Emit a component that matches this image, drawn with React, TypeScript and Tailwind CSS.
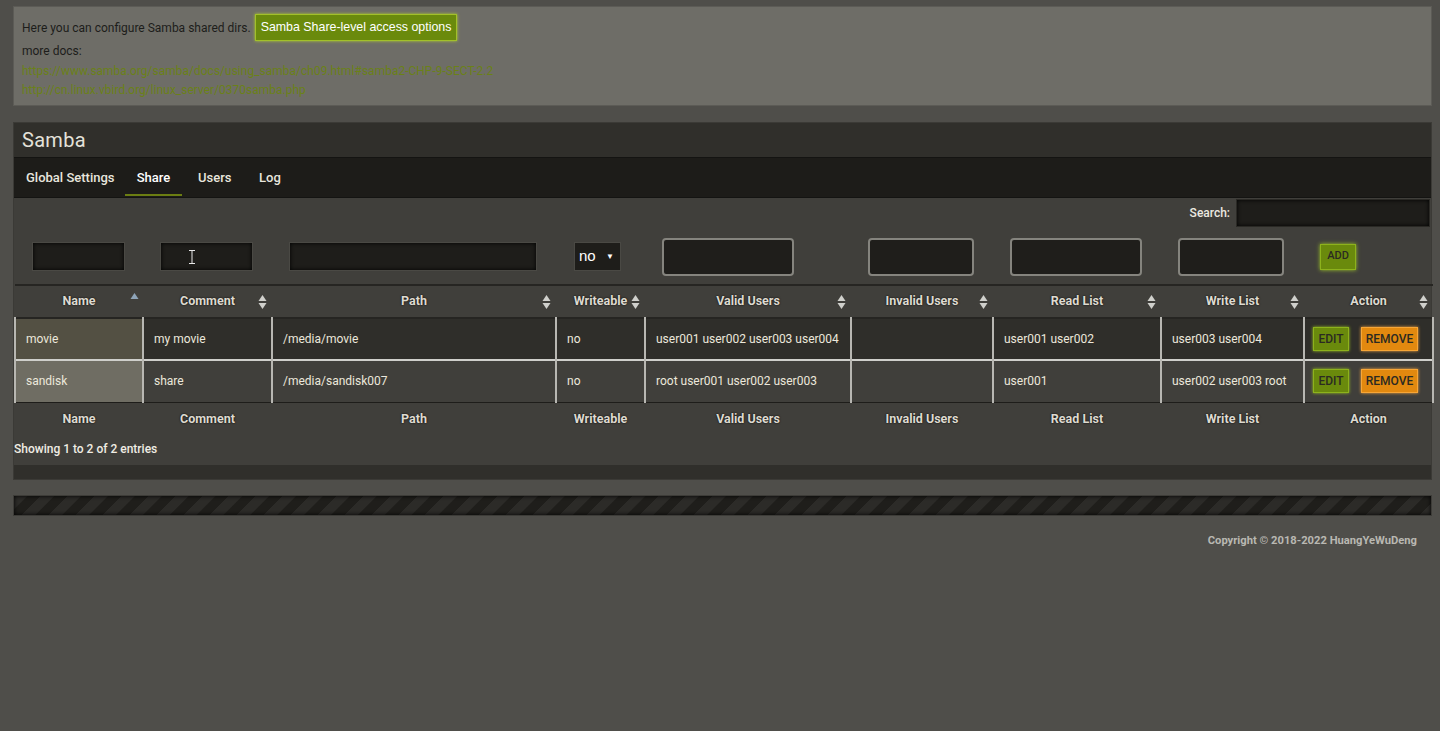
import type { ReactNode } from "react";

const font = "font-['Roboto','Liberation_Sans',sans-serif]";

type Col = { label: string; w: number; sort: "asc" | "both" };

const cols: Col[] = [
  { label: "Name", w: 128, sort: "asc" },
  { label: "Comment", w: 129, sort: "both" },
  { label: "Path", w: 284, sort: "both" },
  { label: "Writeable", w: 89, sort: "both" },
  { label: "Valid Users", w: 206, sort: "both" },
  { label: "Invalid Users", w: 142, sort: "both" },
  { label: "Read List", w: 168, sort: "both" },
  { label: "Write List", w: 143, sort: "both" },
  { label: "Action", w: 129, sort: "both" },
];

const rows = [
  ["movie", "my movie", "/media/movie", "no", "user001 user002 user003 user004", "", "user001 user002", "user003 user004"],
  ["sandisk", "share", "/media/sandisk007", "no", "root user001 user002 user003", "", "user001", "user002 user003 root"],
];

function SortIcon({ kind }: { kind: "asc" | "both" }) {
  if (kind === "asc") {
    return (
      <svg width="9" height="8" viewBox="0 0 9 8" className="absolute right-[4px] top-[6px]">
        <path d="M4.5 1 L8.5 7 L0.5 7 Z" fill="#8ea4b8" />
      </svg>
    );
  }
  return (
    <svg width="9" height="15" viewBox="0 0 9 15" className="absolute right-[5px] top-1/2 -translate-y-1/2">
      <path d="M4.5 0.5 L8.5 6.5 L0.5 6.5 Z" fill="#d0d0cc" />
      <path d="M4.5 14.5 L8.5 8.5 L0.5 8.5 Z" fill="#d0d0cc" />
    </svg>
  );
}

function Btn({ children, tone }: { children: ReactNode; tone: "green" | "orange" }) {
  const cls =
    tone === "green"
      ? "w-[36px] bg-[#6a8a0c] border-[#8db21c] shadow-[0_0_3px_#9cc21e]"
      : "w-[57px] bg-[#e2890f] border-[#f7a637] shadow-[0_0_3px_#f4a640]";
  return (
    <button className={`h-[24px] border px-0 text-[12px] font-medium leading-none text-[#2b2a22] ${cls}`}>
      {children}
    </button>
  );
}

const insetInput = "h-[29px] border border-[#4a4944] bg-[#1e1d1a] shadow-[inset_0_0_4px_#000] outline-none";
const roundInput = "h-[38px] rounded-[4px] border-2 border-[#85847e] bg-[#1f1e1b] outline-none";

export default function App() {
  return (
    <div className={`min-h-[731px] bg-[#4f4e4a] pb-4 pl-[13px] pr-[8px] pt-[6px] ${font}`}>
      <section className="border border-[#5c5b56] bg-[#6e6d67] px-[8px] pb-[6px] pt-[7px] text-[12px] text-[#1d1d1b]">
        <div className="flex h-[27px] items-center gap-[4px]">
          <span>Here you can configure Samba shared dirs.</span>
          <button className="h-[27px] border border-[#a2c02a] bg-[#6a8a0c] px-[5px] font-['Liberation_Sans',sans-serif] text-[12.4px] text-white shadow-[0_0_3px_#b0d030]">
            Samba Share-level access options
          </button>
        </div>
        <p className="leading-[20px]">more docs:</p>
        <p className="leading-[20px] text-[#6b8118]">https://www.samba.org/samba/docs/using_samba/ch09.html#samba2-CHP-9-SECT-2.2</p>
        <p className="leading-[18px] text-[#6b8118]">http://cn.linux.vbird.org/linux_server/0370samba.php</p>
      </section>

      <section className="mt-[16px] border border-[#3b3a36] bg-[#302f2b]">
        <h1 className="flex h-[34px] items-center px-[8px] text-[20px] tracking-[0.3px] text-[#e4e2da]">Samba</h1>
        <nav className="flex h-[41px] items-stretch border-y border-[#141412] bg-[#1d1c19] pt-[1px] text-[13px] font-medium text-[#e8e6de]">
          <span className="flex w-[107px] items-center pl-[12px]">Global Settings</span>
          <span className="relative ml-[4px] flex w-[57px] items-center justify-center text-white">
            Share
            <span className="absolute bottom-[1px] left-0 right-0 h-[2px] bg-[#6b7d12]" />
          </span>
          <span className="ml-[4px] flex w-[56px] items-center pl-[12px]">Users</span>
          <span className="ml-[5px] flex items-center pl-[12px]">Log</span>
        </nav>

        <div className="bg-[#403f3b]">
          <div className="flex items-center justify-end gap-[6px] pr-[1px] pt-[1px]">
            <span className="text-[12px] font-medium text-[#ece9e0]">Search:</span>
            <input className="h-[28px] w-[194px] border border-[#2a2925] bg-[#1e1d1a] shadow-[inset_0_0_4px_#000] outline-none" />
          </div>

          <div className="flex h-[57px] items-center pl-[18px] pt-[2px]">
            <input className={`w-[93px] ${insetInput}`} />
            <div className="relative ml-[35px]">
              <input className={`w-[93px] ${insetInput}`} />
              <svg width="8" height="14" viewBox="0 0 8 14" className="absolute left-[28px] top-[8px]">
                <path d="M1 0.5 H7 M4 0.5 V13.5 M1 13.5 H7" stroke="#e8e8e8" strokeWidth="1" fill="none" />
              </svg>
            </div>
            <input className={`ml-[36px] w-[248px] ${insetInput}`} />
            <div className="ml-[37px] flex h-[29px] w-[47px] items-center justify-between border border-[#4a4944] bg-[#1e1d1a] pl-[4px] pr-[6px] font-['Liberation_Sans',sans-serif] text-[15px] text-white">
              <span>no</span>
              <span className="text-[8px]">▼</span>
            </div>
            <input className={`ml-[41px] w-[132px] ${roundInput}`} />
            <input className={`ml-[74px] w-[106px] ${roundInput}`} />
            <input className={`ml-[36px] w-[132px] ${roundInput}`} />
            <input className={`ml-[36px] w-[106px] ${roundInput}`} />
            <button className="ml-[36px] h-[26px] w-[36px] border border-[#8db21c] bg-[#6a8a0c] text-[11px] font-medium text-[#2b2a22] shadow-[0_0_4px_#a0c828]">
              ADD
            </button>
          </div>

          <table className="w-full table-fixed border-collapse text-[12px]">
            <colgroup>
              {cols.map((c) => (
                <col key={c.label} style={{ width: c.w }} />
              ))}
            </colgroup>
            <thead>
              <tr className="h-[33px] border-t-2 border-b-2 border-[#262522]">
                {cols.map((c) => (
                  <th key={c.label} className="relative text-[12.5px] font-bold text-[#dedad0] [text-shadow:0_0_2px_#000]">
                    {c.label}
                    <SortIcon kind={c.sort} />
                  </th>
                ))}
              </tr>
            </thead>
            <tbody>
              {rows.map((r, i) => (
                <tr
                  key={r[0]}
                  className={`h-[42px] ${i === 0 ? "border-b-2 border-[#cfcfcb] bg-[#2f2e2a]" : "border-b border-[#1e1d1a] bg-[#403f3b]"}`}
                >
                  {r.map((cell, j) => (
                    <td
                      key={j}
                      className={`border-x-2 border-[#b8b7b2] px-[10px] text-[#ece8dc] ${j === 0 ? (i === 0 ? "bg-[#535043]" : "bg-[#6f6d63]") : ""}`}
                    >
                      {cell}
                    </td>
                  ))}
                  <td className="border-x-2 border-[#b8b7b2] pl-[8px]">
                    <div className="flex gap-[12px]">
                      <Btn tone="green">EDIT</Btn>
                      <Btn tone="orange">REMOVE</Btn>
                    </div>
                  </td>
                </tr>
              ))}
            </tbody>
            <tfoot>
              <tr className="h-[35px]">
                {cols.map((c) => (
                  <th key={c.label} className="text-[12.5px] font-bold text-[#dedad0] [text-shadow:0_0_2px_#000]">
                    {c.label}
                  </th>
                ))}
              </tr>
            </tfoot>
          </table>
          <p className="pb-[7px] pt-[3px] text-[12px] font-medium text-[#f0ede4]">Showing 1 to 2 of 2 entries</p>
        </div>
        <div className="h-[14px] bg-[#302f2b]" />
      </section>

      <div className="mt-[15px] h-[21px] border border-[#3d3c38] bg-[repeating-linear-gradient(135deg,#2c2b28_0px,#2c2b28_9px,#1f1e1b_10px,#1f1e1b_19px)] shadow-[inset_0_0_4px_#000]" />

      <p className="mt-[17px] pr-[15px] text-right text-[11.2px] font-bold text-[#b9b8b2]">Copyright © 2018-2022 HuangYeWuDeng</p>
    </div>
  );
}
